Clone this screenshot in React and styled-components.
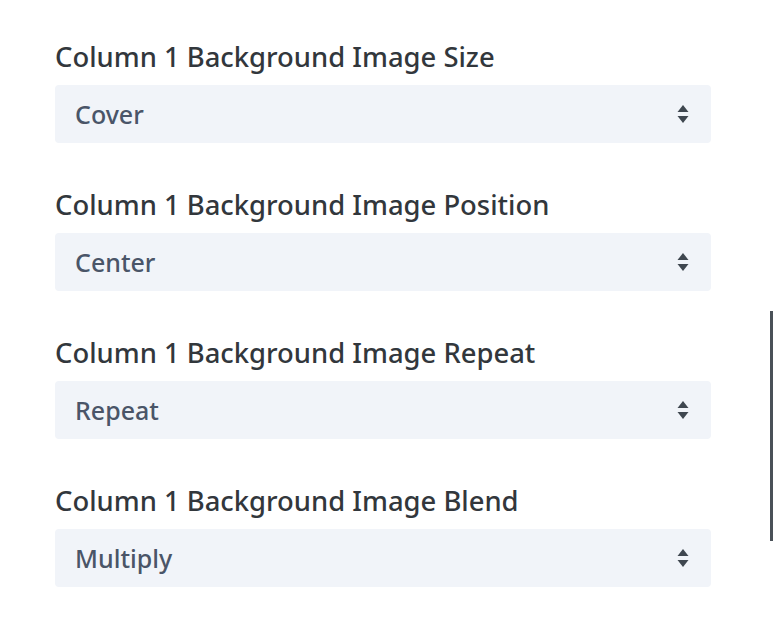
import React from 'react';
import styled, { createGlobalStyle } from 'styled-components';

const GlobalStyle = createGlobalStyle`
  body {
    margin: 0;
    background: #ffffff;
    font-family: 'Noto Sans', 'Open Sans', sans-serif;
  }
`;

// Settings panel
const Panel = styled.div`
  position: relative;
  width: 774px;
  height: 626px;
  box-sizing: border-box;
  padding: 41px 63px 0 55px;
  display: flex;
  flex-direction: column;
  gap: 46px;
  overflow: hidden;
`;

const Field = styled.div`
  display: flex;
  flex-direction: column;
  gap: 12px;
`;

const Label = styled.div`
  font-size: 27.4px;
  line-height: 32px;
  font-weight: 500;
  color: #32373c;
`;

const Select = styled.div`
  height: 58px;
  box-sizing: border-box;
  padding: 0 22px 0 20px;
  display: flex;
  align-items: center;
  justify-content: space-between;
  background: #f1f4f9;
  border-radius: 4px;
`;

const Value = styled.span`
  font-size: 25px;
  font-weight: 500;
  color: #4a5568;
`;

const Scrollbar = styled.div`
  position: absolute;
  right: 1px;
  top: 311px;
  width: 3px;
  height: 230px;
  background: #4a5158;
`;

const Arrows = () => (
  <svg width="12" height="18" viewBox="0 0 12 18">
    <path d="M6 0 L11.5 7 L0.5 7 Z" fill="#3f4750" />
    <path d="M6 18 L11.5 11 L0.5 11 Z" fill="#3f4750" />
  </svg>
);

const fields = [
  { label: 'Column 1 Background Image Size', value: 'Cover' },
  { label: 'Column 1 Background Image Position', value: 'Center' },
  { label: 'Column 1 Background Image Repeat', value: 'Repeat' },
  { label: 'Column 1 Background Image Blend', value: 'Multiply' },
];

const App = () => (
  <>
    <GlobalStyle />
    <Panel>
      {fields.map((f) => (
        <Field key={f.label}>
          <Label>{f.label}</Label>
          <Select>
            <Value>{f.value}</Value>
            <Arrows />
          </Select>
        </Field>
      ))}
      <Scrollbar />
    </Panel>
  </>
);

export default App;
